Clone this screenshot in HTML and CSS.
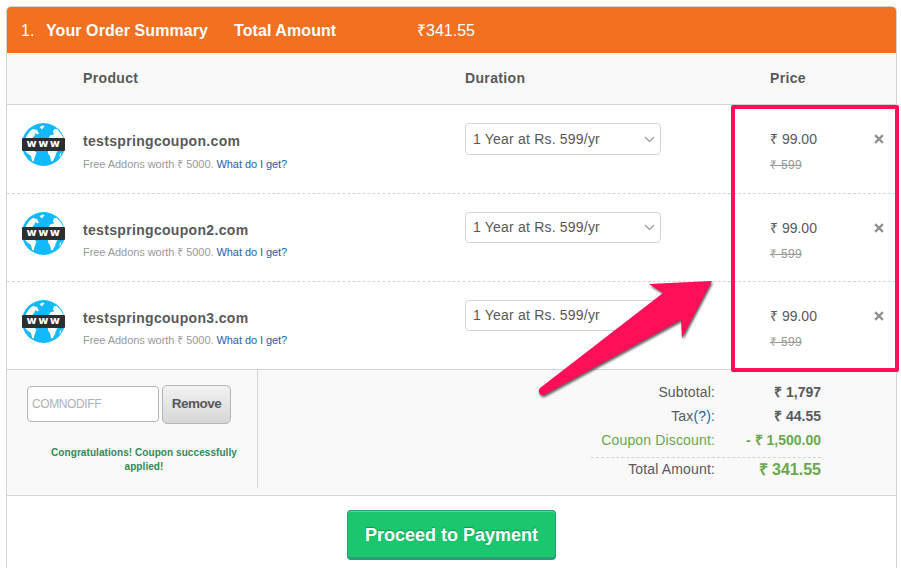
FILE: index.html
```html
<!DOCTYPE html>
<html lang="en">
<head>
<meta charset="utf-8">
<title>Order Summary</title>
<link rel="stylesheet" href="styles.css">
</head>
<body>
<svg class="defs" width="0" height="0" aria-hidden="true">
  <symbol id="globe" viewBox="0 0 44 44">
    <circle cx="21.5" cy="21.500" r="21.500" fill="#12b9ff"/>
    <path fill="#fff" d="M3.500 16C5 11 8 7.500 11 6l4 1 2 3.500-1.500 1-2-1.500-1 2.500-3 3.500zM17.500 4l3.500-1.500 1.500.500L20 6.500zM27 15l1-2.500 4-1-1-3 1.500-2.500 2.500 0 3.500 4 3 5zM3 28H12.500l2 1.500-1.500 4-1.500 5-1.500-.500-1-5-3.500-2.500zM26 28h9.500l-1.500 2.500-1 3.500-2.500 4.500-1.500-.5-1-5-2-2.500zM38 30.500l1.500-1-1 4-1 .5z"/>
  </symbol>
  <symbol id="chevron" viewBox="0 0 11 7"><path d="M1 1l4.500 4.500L10 1" fill="none" stroke="#a0a3a8" stroke-width="1.500"/></symbol>
  <symbol id="cross" viewBox="0 0 9 9"><path d="M1 1l7 7M8 1L1 8" fill="none" stroke="#8e9191" stroke-width="2"/></symbol>
</svg>
<main class="order">
  <header class="order-head">
    <span class="step">1.</span>
    <strong class="title">Your Order Summary</strong>
    <strong class="amount-label">Total Amount</strong>
    <span class="amount">₹341.55</span>
  </header>
  <div class="columns grid">
    <span></span><span>Product</span><span>Duration</span><span>Price</span><span></span>
  </div>
  <div class="item first grid">
    <div class="globe"><svg><use href="#globe"/></svg><span class="www">www</span></div>
    <div class="product"><div class="name">testspringcoupon.com</div><div class="addons">Free Addons worth ₹ 5000. <a>What do I get?</a></div></div>
    <div class="select"><span>1 Year at Rs. 599/yr</span><svg class="chevron"><use href="#chevron"/></svg></div>
    <div class="price"><div>₹ 99.00</div><del>₹ 599</del></div>
    <svg class="cross"><use href="#cross"/></svg>
  </div>
  <div class="item grid">
    <div class="globe"><svg><use href="#globe"/></svg><span class="www">www</span></div>
    <div class="product"><div class="name">testspringcoupon2.com</div><div class="addons">Free Addons worth ₹ 5000. <a>What do I get?</a></div></div>
    <div class="select"><span>1 Year at Rs. 599/yr</span><svg class="chevron"><use href="#chevron"/></svg></div>
    <div class="price"><div>₹ 99.00</div><del>₹ 599</del></div>
    <svg class="cross"><use href="#cross"/></svg>
  </div>
  <div class="item last grid">
    <div class="globe"><svg><use href="#globe"/></svg><span class="www">www</span></div>
    <div class="product"><div class="name">testspringcoupon3.com</div><div class="addons">Free Addons worth ₹ 5000. <a>What do I get?</a></div></div>
    <div class="select"><span>1 Year at Rs. 599/yr</span><svg class="chevron"><use href="#chevron"/></svg></div>
    <div class="price"><div>₹ 99.00</div><del>₹ 599</del></div>
    <svg class="cross"><use href="#cross"/></svg>
  </div>
  <section class="summary">
    <div class="coupon">
      <div class="coupon-form"><div class="code">COMNODIFF</div><button class="remove">Remove</button></div>
      <p class="message">Congratulations! Coupon successfully applied!</p>
    </div>
    <div class="totals">
      <div class="line"><span>Subtotal:</span><b>₹ 1,797</b></div>
      <div class="line"><span>Tax<a>(?)</a>:</span><b>₹ 44.55</b></div>
      <div class="line green"><span>Coupon Discount:</span><b>- ₹ 1,500.00</b></div>
      <div class="line total"><span>Total Amount:</span><b>₹ 341.55</b></div>
    </div>
  </section>
  <div class="checkout"><button class="pay">Proceed to Payment</button></div>
</main>
<div class="highlight"></div>
<svg class="arrow" width="190" height="130" viewBox="0 0 190 130"><path fill="#ff0f57" d="M182 6 119 9l14 9L10 113q-3 4 1 7h3L151 45l1 18z"/></svg>
</body>
</html>
```
FILE: styles.css
```css
* { box-sizing: border-box; }
body {
  margin: 0;
  padding: 6px 4px 0 6px;
  height: 568px;
  overflow: hidden;
  background: #fff;
  color: #58595b;
  font: 14px "Liberation Sans", Arial, sans-serif;
}
.defs { position: absolute; }
a { color: #1f5fa8; }
.order {
  height: 570px;
  border: 1px solid #d3d4d4;
  border-radius: 5px 5px 0 0;
  overflow: hidden;
}
.order-head {
  display: flex;
  align-items: center;
  height: 46px;
  padding: 1px 0 0 14px;
  background: #f37021;
  color: #fff;
  font-size: 16px;
  line-height: 20px;
}
.step { width: 25px; }
.title { width: 188px; letter-spacing: 0.08px; }
.amount-label { width: 183px; letter-spacing: 0.08px; }
.grid {
  display: grid;
  grid-template-columns: 61px 382px 305px 104px 1fr;
  padding-left: 15px;
}
.columns {
  height: 52px;
  padding-bottom: 2px;
  align-items: center;
  border-bottom: 1px solid #d3d4d4;
  background: #f9f9f9;
  font-weight: bold;
  letter-spacing: 0.35px;
}
.item {
  height: 88px;
  padding-top: 18px;
  align-items: start;
  border-bottom: 1px dashed #d3d4d4;
}
.first { height: 89px; }
.last { border-bottom-style: solid; }
.globe { position: relative; width: 44px; height: 44px; }
.globe svg { display: block; width: 44px; height: 44px; }
.www {
  position: absolute;
  left: 0;
  top: 15px;
  width: 43px;
  height: 13px;
  padding-left: 1px;
  border-radius: 1px;
  background: #2c2f31;
  color: #fff;
  font: bold 11px/12px "DejaVu Sans", sans-serif;
  letter-spacing: 1.5px;
  text-align: center;
}
.name {
  margin-top: 10px;
  font-weight: bold;
  line-height: 17px;
  letter-spacing: 0.32px;
}
.addons {
  margin-top: 6px;
  color: #999;
  font-size: 11px;
  line-height: 14px;
  letter-spacing: -0.06px;
}
.first .addons { margin-top: 7px; }
.select {
  display: flex;
  align-items: center;
  justify-content: space-between;
  width: 196px;
  height: 31px;
  padding: 0 5px 0 7px;
  border: 1px solid #d3d4d4;
  border-radius: 4px;
  letter-spacing: 0.2px;
}
.item:not(.first) .select span { margin-top: -2px; }
.first .select { height: 32px; }
.chevron { width: 11px; height: 7px; }
.price { padding-top: 8px; line-height: 17px; }
.price del { display: block; margin-top: 9px; color: #999; font-size: 12px; line-height: 16px; letter-spacing: 0.3px; }
.cross { width: 10px; height: 10px; margin-top: 11px; }
.summary {
  display: flex;
  justify-content: space-between;
  height: 126px;
  border-bottom: 1px solid #d3d4d4;
  background: #f9f9f9;
}
.coupon {
  width: 251px;
  height: 118px;
  padding: 15px 20px 0;
  border-right: 1px solid #d3d4d4;
}
.coupon-form { display: flex; align-items: flex-start; gap: 3px; }
.code {
  width: 132px;
  height: 36px;
  margin-top: 1px;
  padding-left: 4px;
  border: 1px solid #b5b5b5;
  border-radius: 4px;
  background: #fff;
  color: #b0b0b0;
  font-size: 12px;
  line-height: 34px;
  letter-spacing: -0.4px;
}
.remove {
  width: 69px;
  height: 39px;
  padding: 0 0 2px;
  border: 1px solid #b5b5b5;
  border-radius: 5px;
  background: linear-gradient(#f2f2f2, #d6d6d6);
  color: #58595b;
  font: bold 13.500px "Liberation Sans", Arial, sans-serif;
  letter-spacing: -0.5px;
}
.message {
  width: 200px;
  margin: 22px 0 0 17px;
  color: #2e8b57;
  font-size: 10px;
  font-weight: bold;
  line-height: 14px;
  letter-spacing: 0.07px;
  text-align: center;
}
.totals { width: 230px; margin: 10px 75px 0 0; }
.line {
  display: grid;
  grid-template-columns: 124px 106px;
  height: 24px;
  line-height: 25px;
  text-align: right;
}
.line span { letter-spacing: 0.15px; }
.green, .total b { color: #6aa84f; }
.total { height: 24px; margin-top: 5px; border-top: 1px dashed #d3d4d4; line-height: 23px; }
.total b { font-size: 16px; }
.checkout { display: flex; justify-content: center; padding: 14px 0 0 0; }
.pay {
  width: 209px;
  height: 50px;
  padding: 2px 0 0;
  border: 1px solid #2a9d78;
  border-bottom-width: 3px;
  border-radius: 4px;
  background: #1ac76f;
  box-shadow: inset 0 1px #5cd39a;
  color: #fff;
  font: bold 18px "Liberation Sans", Arial, sans-serif;
  text-shadow: 0 -1px 1px #168f58;
}
.highlight {
  position: absolute;
  left: 731px;
  top: 105px;
  width: 168px;
  height: 267px;
  border: 4px solid #ff0f57;
  border-radius: 2px;
}
.arrow {
  position: absolute;
  left: 530px;
  top: 275px;
  filter: drop-shadow(1px 2px 1px rgba(0, 0, 0, 0.6));
}
```
